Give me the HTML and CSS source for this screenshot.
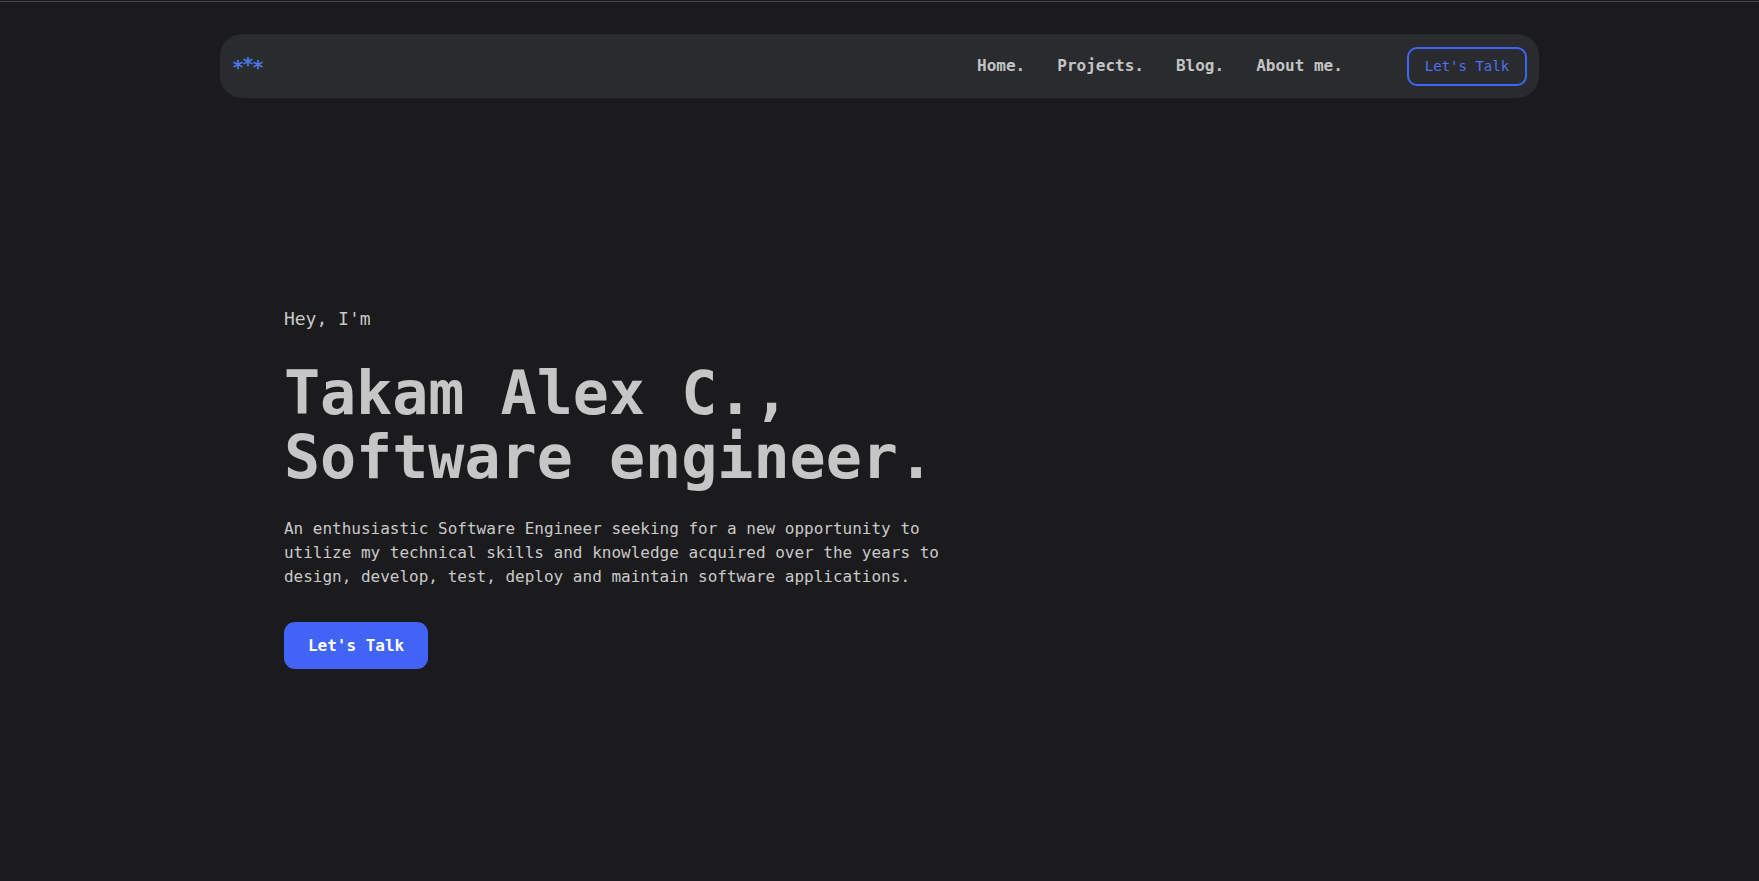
FILE: index.html
```html
<!DOCTYPE html>
<html lang="en">
<head>
<meta charset="utf-8">
<title>Takam Alex C. — Software engineer</title>
<link rel="stylesheet" href="styles.css">
</head>
<body>
<div class="page">
  <header class="navbar">
    <a class="logo" href="#">*<span class="logo-up">*</span>*</a>
    <nav class="nav">
      <ul class="nav-links">
        <li><a href="#">Home.</a></li>
        <li><a href="#">Projects.</a></li>
        <li><a href="#">Blog.</a></li>
        <li><a href="#">About me.</a></li>
      </ul>
      <a class="btn-outline" href="#">Let's Talk</a>
    </nav>
  </header>
  <main class="hero">
    <p class="hero-intro">Hey, I'm</p>
    <h1 class="hero-title">Takam Alex C.,<br>Software engineer.</h1>
    <p class="hero-text">An enthusiastic Software Engineer seeking for a new opportunity to utilize my technical skills and knowledge acquired over the years to design, develop, test, deploy and maintain software applications.</p>
    <a class="btn-primary" href="#">Let's Talk</a>
  </main>
</div>
</body>
</html>
```

FILE: styles.css
```css
html {
  background: #1b1b1d;
}
body {
  margin: 1px 0 0 0;
  border-top: 1px solid #48484b;
  background: #1b1b1d;
  color: #c9c9c9;
  font-family: "DejaVu Sans Mono", "Liberation Mono", monospace;
  min-height: 878px;
}
a {
  text-decoration: none;
  color: inherit;
}
.page {
  width: 75%;
  margin: 0 auto;
  padding-top: 32px;
}
.navbar {
  display: flex;
  align-items: center;
  justify-content: space-between;
  height: 64px;
  padding: 0 12px;
  background: #2a2b2e;
  border-radius: 22px;
  box-sizing: border-box;
}
.logo {
  color: #4a78e6;
  font-size: 20px;
  font-weight: bold;
  letter-spacing: -2px;
  line-height: 1;
  padding-top: 2px;
}
.logo-up {
  position: relative;
  top: -3px;
}
.nav {
  display: flex;
  align-items: center;
  gap: 64px;
}
.nav-links {
  display: flex;
  gap: 32px;
  list-style: none;
  margin: 0;
  padding: 0;
}
.nav-links a {
  font-size: 16px;
  font-weight: bold;
  line-height: 22px;
  color: #c4c4c4;
}
.btn-outline {
  display: block;
  font-size: 14px;
  line-height: 21px;
  padding: 7px 16px;
  border: 2px solid #3f66f2;
  border-radius: 10px;
  color: #4d72f0;
}
.hero {
  padding: 207px 64px 0;
}
.hero-intro {
  margin: 0;
  font-size: 18px;
  line-height: 27px;
  color: #c8c8c8;
}
.hero-title {
  margin: 29px 0 0;
  font-size: 60px;
  line-height: 64px;
  font-weight: bold;
  color: #c6c6c6;
}
.hero-text {
  margin: 28px 0 0;
  max-width: 680px;
  font-size: 16px;
  line-height: 24px;
  color: #c9c9c9;
}
.btn-primary {
  display: inline-block;
  margin-top: 33px;
  padding: 12px 24px;
  font-size: 16px;
  line-height: 23px;
  font-weight: bold;
  background: #4164f7;
  color: #ffffff;
  border-radius: 11px;
}
```
